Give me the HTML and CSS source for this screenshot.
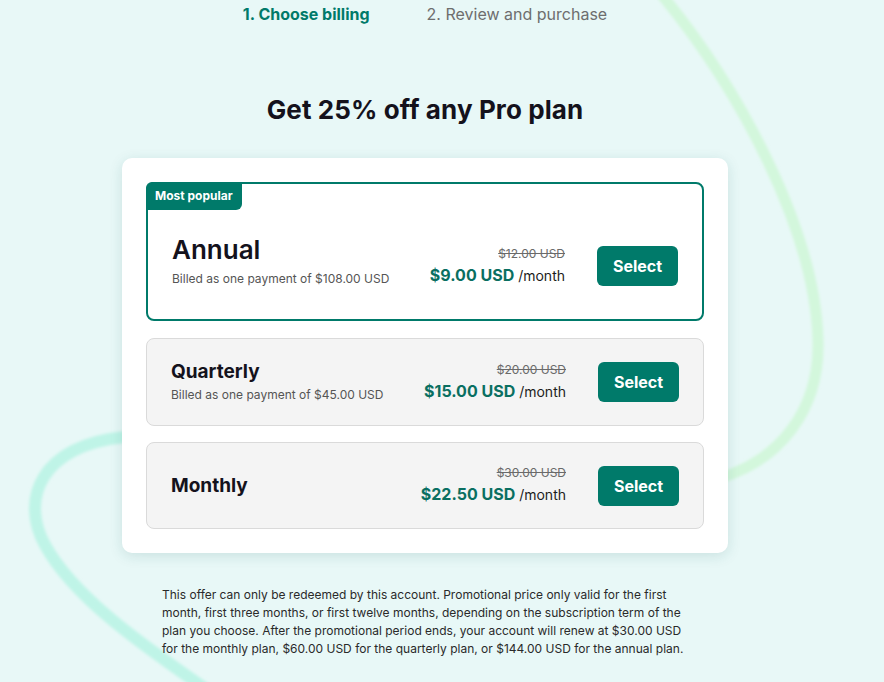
FILE: index.html
```html
<!DOCTYPE html>
<html lang="en">
<head>
<meta charset="utf-8">
<title>Choose billing</title>
<link rel="stylesheet" href="styles.css">
</head>
<body>
<svg class="bg-deco" width="884" height="682" viewBox="0 0 884 682" aria-hidden="true">
  <defs>
    <filter id="soft" x="-20%" y="-20%" width="140%" height="140%"><feGaussianBlur stdDeviation="1.6"/></filter>
  </defs>
  <path d="M 662 -5 C 740 90, 815 230, 818 340 C 820 410, 780 460, 720 478" fill="none" stroke="#d3f7dc" stroke-width="11" stroke-linecap="round" filter="url(#soft)"/>
  <path d="M 125 437 C 40 445, 20 500, 45 545 C 75 600, 150 650, 210 692" fill="none" stroke="#bff4e7" stroke-width="12" stroke-linecap="round" filter="url(#soft)"/>
</svg>
<main class="page">
  <nav class="steps">
    <span class="step step-active">1. Choose billing</span>
    <span class="step">2. Review and purchase</span>
  </nav>
  <h1 class="headline">Get 25% off any Pro plan</h1>
  <section class="card">
    <div class="plan plan-featured">
      <span class="badge">Most popular</span>
      <div class="plan-row plan-row-featured">
        <div class="plan-info plan-info-featured">
          <div class="plan-name plan-name-lg">Annual</div>
          <div class="plan-note">Billed as one payment of $108.00 USD</div>
        </div>
        <div class="price">
          <div class="price-old">$12.00 USD</div>
          <div class="price-new"><strong>$9.00 USD</strong> <span class="per">/month</span></div>
        </div>
        <button class="select-btn">Select</button>
      </div>
    </div>
    <div class="plan">
      <div class="plan-row">
        <div class="plan-info">
          <div class="plan-name">Quarterly</div>
          <div class="plan-note">Billed as one payment of $45.00 USD</div>
        </div>
        <div class="price">
          <div class="price-old">$20.00 USD</div>
          <div class="price-new"><strong>$15.00 USD</strong> <span class="per">/month</span></div>
        </div>
        <button class="select-btn">Select</button>
      </div>
    </div>
    <div class="plan">
      <div class="plan-row">
        <div class="plan-info">
          <div class="plan-name">Monthly</div>
        </div>
        <div class="price">
          <div class="price-old">$30.00 USD</div>
          <div class="price-new"><strong>$22.50 USD</strong> <span class="per">/month</span></div>
        </div>
        <button class="select-btn">Select</button>
      </div>
    </div>
  </section>
  <p class="disclaimer">This offer can only be redeemed by this account. Promotional price only valid for the first month, first three months, or first twelve months, depending on the subscription term of the plan you choose. After the promotional period ends, your account will renew at $30.00 USD for the monthly plan, $60.00 USD for the quarterly plan, or $144.00 USD for the annual plan.</p>
</main>
</body>
</html>
```

FILE: styles.css
```css
* { box-sizing: border-box; }

html, body {
  margin: 0;
  padding: 0;
}

body {
  background: #e8f8f7;
  font-family: Inter, "Noto Sans", sans-serif;
  color: #14121c;
  min-height: 682px;
  overflow: hidden;
  position: relative;
}

.bg-deco {
  position: absolute;
  left: 0;
  top: 0;
  z-index: 0;
  pointer-events: none;
}

.page {
  position: relative;
  z-index: 1;
  width: 850px;
  display: flex;
  flex-direction: column;
  align-items: center;
}

.steps {
  display: flex;
  gap: 57px;
  height: 28px;
  align-items: center;
  font-size: 16px;
  line-height: 28px;
}

.step {
  color: #6e6e6e;
}

.step-active {
  color: #007a6a;
  font-weight: 700;
}

.headline {
  margin: 64px 0 0;
  font-size: 26px;
  line-height: 36px;
  font-weight: 700;
  letter-spacing: 0.1px;
  color: #14121c;
}

.card {
  margin-top: 30px;
  width: 606px;
  background: #ffffff;
  border-radius: 10px;
  padding: 24px;
  box-shadow: 0 3px 14px rgba(20, 90, 90, 0.14);
  display: flex;
  flex-direction: column;
  gap: 16px;
}

.plan {
  background: #f4f4f4;
  border: 1px solid #dadada;
  border-radius: 8px;
}

.plan-featured {
  background: #ffffff;
  border: 2px solid #007a6a;
  margin-bottom: 1px;
}

.badge {
  display: inline-block;
  margin: -2px 0 0 -2px;
  height: 28px;
  line-height: 28px;
  padding: 0 9px;
  background: #007a6a;
  color: #ffffff;
  font-size: 12px;
  font-weight: 700;
  border-radius: 6px 0 6px 0;
  vertical-align: top;
}

.plan-row {
  display: flex;
  align-items: center;
  padding: 21px 24px 21px 24px;
}

.plan-row-featured {
  padding: 24px 24px 21px 24px;
}

.plan-info {
  display: flex;
  flex-direction: column;
  gap: 2px;
}

.plan-info-featured {
  gap: 4px;
  padding-bottom: 10px;
}

.plan-name {
  font-size: 19px;
  line-height: 24px;
  font-weight: 700;
  color: #14121c;
}

.plan-name-lg {
  font-size: 26px;
  line-height: 32px;
  font-weight: 600;
}

.plan-note {
  font-size: 12px;
  line-height: 18px;
  color: #555555;
}

.price {
  margin-left: auto;
  text-align: right;
}

.price-old {
  font-size: 12px;
  line-height: 18px;
  color: #6a6a6a;
  text-decoration: line-through;
}

.price-new {
  font-size: 14px;
  line-height: 24px;
  color: #1c1c1c;
}

.price-new strong {
  font-size: 16px;
  font-weight: 700;
  color: #0a6f61;
}

.select-btn {
  margin-left: 32px;
  width: 81px;
  height: 40px;
  border: 0;
  border-radius: 6px;
  background: #007a6a;
  color: #ffffff;
  font-family: inherit;
  font-size: 16px;
  font-weight: 700;
  cursor: pointer;
}

.disclaimer {
  margin: 33px 0 0;
  width: 526px;
  font-size: 12px;
  line-height: 18px;
  color: #2a2a2a;
}
```
